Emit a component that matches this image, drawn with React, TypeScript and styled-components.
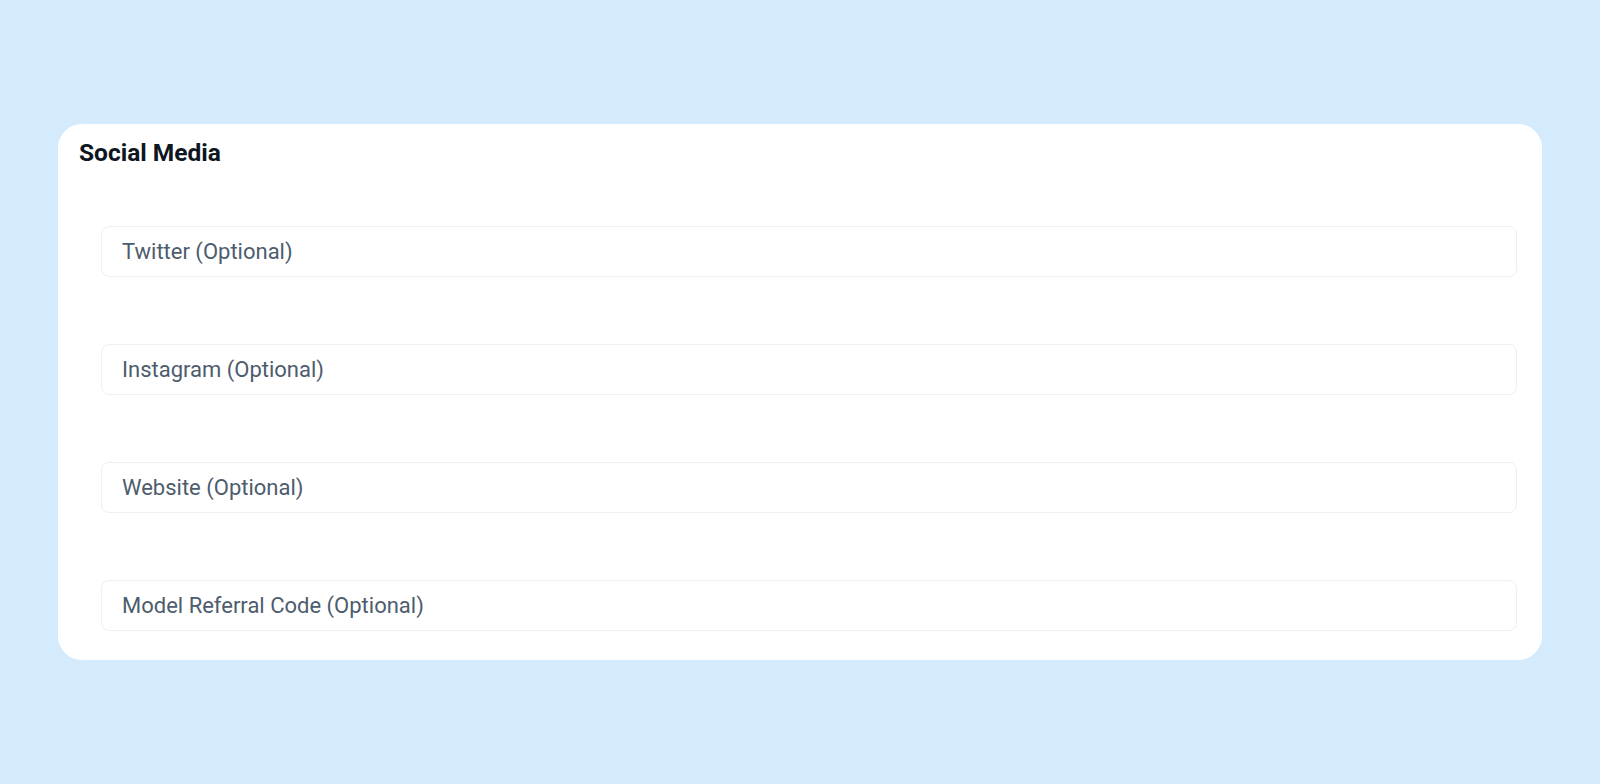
import styled, { createGlobalStyle } from 'styled-components'

const GlobalStyle = createGlobalStyle`
  * { box-sizing: border-box; }
  html, body {
    margin: 0;
    padding: 0;
    background: #d4ebfd;
    font-family: Roboto, "Liberation Sans", Arial, sans-serif;
  }
`

const Page = styled.div`
  min-height: 784px;
  padding: 124px 58px 0 58px;
`

const Card = styled.section`
  width: 1484px;
  background: #ffffff;
  border-radius: 24px;
  padding: 15px 25px 29px 21px;
`

const Title = styled.h2`
  margin: 0;
  font-size: 24.5px;
  line-height: 28.8px;
  font-weight: 700;
  color: #0e1621;
`

const Fields = styled.div`
  display: flex;
  flex-direction: column;
  gap: 67px;
  margin: 58px 0 0 22px;
`

const Field = styled.input`
  display: block;
  width: 100%;
  height: 51px;
  padding: 0 20px;
  border: 1px solid #efefef;
  border-radius: 8px;
  background: #ffffff;
  font-family: Roboto, "Liberation Sans", Arial, sans-serif;
  font-size: 22px;
  color: #1f2937;
  outline: none;

  &::placeholder {
    color: #4d5c6d;
    opacity: 1;
  }
`

const fields = [
  'Twitter (Optional)',
  'Instagram (Optional)',
  'Website (Optional)',
  'Model Referral Code (Optional)'
]

export default function App() {
  return (
    <>
      <GlobalStyle />
      <Page>
        <Card>
          <Title>Social Media</Title>
          <Fields>
            {fields.map((label) => (
              <Field key={label} type="text" placeholder={label} />
            ))}
          </Fields>
        </Card>
      </Page>
    </>
  )
}
